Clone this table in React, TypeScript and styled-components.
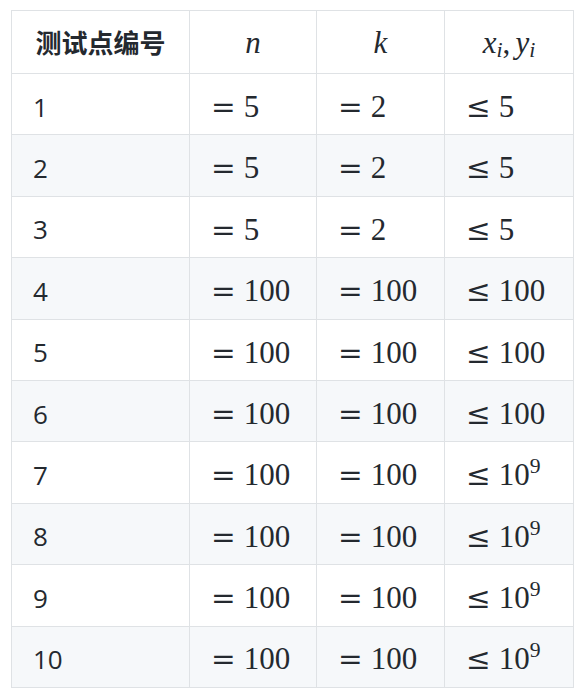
import React from "react";
import styled, { createGlobalStyle } from "styled-components";

const Global = createGlobalStyle`
  html, body { margin: 0; padding: 0; background: #ffffff; }
  body { font-family: "Open Sans", "Noto Sans", "Noto Sans CJK SC", sans-serif; color: #24292f; }
`;

const Page = styled.div`
  padding: 10px 0 0 11px;
`;

const Table = styled.table`
  border-collapse: collapse;
  border-spacing: 0;
  table-layout: fixed;
  width: 562px;
  font-size: 26px;
`;

const HeadRow = styled.tr`
  height: 63px;
  background: #ffffff;
`;

const Row = styled.tr<{ $striped: boolean }>`
  height: 61.4px;
  background: ${(p) => (p.$striped ? "#f6f8fa" : "#ffffff")};
`;

const Th = styled.th`
  border: 1px solid #dfe2e5;
  padding: 0 21px;
  text-align: center;
  font-weight: 700;
  font-family: "Noto Sans CJK SC", "Open Sans", sans-serif;
  font-size: 26px;
  color: #24292f;
  line-height: 1;
`;

const Td = styled.td`
  border: 1px solid #dfe2e5;
  padding: 5px 21px 0;
  text-align: left;
  line-height: 1;
  vertical-align: middle;
  white-space: nowrap;
`;

const Math = styled.span`
  font-family: "Liberation Serif", "Times New Roman", serif;
  font-size: 31px;
  font-weight: 400;
  color: #24292f;
`;

const Var = styled.i`
  font-style: italic;
`;

const Rel = styled.span`
  font-family: "DejaVu Serif", serif;
  font-size: 0.95em;
  margin-right: 0.2778em;
`;

const Punct = styled.span`
  margin-right: 0.17em;
`;

const Sub = styled.sub`
  font-size: 0.7em;
  vertical-align: -0.2em;
  line-height: 0;
`;

const Sup = styled.sup`
  font-size: 0.7em;
  vertical-align: 0.55em;
  line-height: 0;
`;

type R = { id: number; n: string; k: string; x: string; pow?: boolean };

const rows: R[] = [
  { id: 1, n: "5", k: "2", x: "5" },
  { id: 2, n: "5", k: "2", x: "5" },
  { id: 3, n: "5", k: "2", x: "5" },
  { id: 4, n: "100", k: "100", x: "100" },
  { id: 5, n: "100", k: "100", x: "100" },
  { id: 6, n: "100", k: "100", x: "100" },
  { id: 7, n: "100", k: "100", x: "10", pow: true },
  { id: 8, n: "100", k: "100", x: "10", pow: true },
  { id: 9, n: "100", k: "100", x: "10", pow: true },
  { id: 10, n: "100", k: "100", x: "10", pow: true },
];

export default function App() {
  return (
    <>
      <Global />
      <Page>
        <Table>
          <colgroup>
            <col style={{ width: 178 }} />
            <col style={{ width: 127 }} />
            <col style={{ width: 128 }} />
            <col style={{ width: 129 }} />
          </colgroup>
          <thead>
            <HeadRow>
              <Th>测试点编号</Th>
              <Th>
                <Math><Var>n</Var></Math>
              </Th>
              <Th>
                <Math><Var>k</Var></Math>
              </Th>
              <Th>
                <Math>
                  <Var>x</Var><Sub><Var>i</Var></Sub><Punct>,</Punct><Var>y</Var><Sub><Var>i</Var></Sub>
                </Math>
              </Th>
            </HeadRow>
          </thead>
          <tbody>
            {rows.map((r) => (
              <Row key={r.id} $striped={r.id % 2 === 0}>
                <Td>{r.id}</Td>
                <Td>
                  <Math><Rel>=</Rel>{r.n}</Math>
                </Td>
                <Td>
                  <Math><Rel>=</Rel>{r.k}</Math>
                </Td>
                <Td>
                  <Math>
                    <Rel>≤</Rel>
                    {r.x}
                    {r.pow && <Sup>9</Sup>}
                  </Math>
                </Td>
              </Row>
            ))}
          </tbody>
        </Table>
      </Page>
    </>
  );
}
